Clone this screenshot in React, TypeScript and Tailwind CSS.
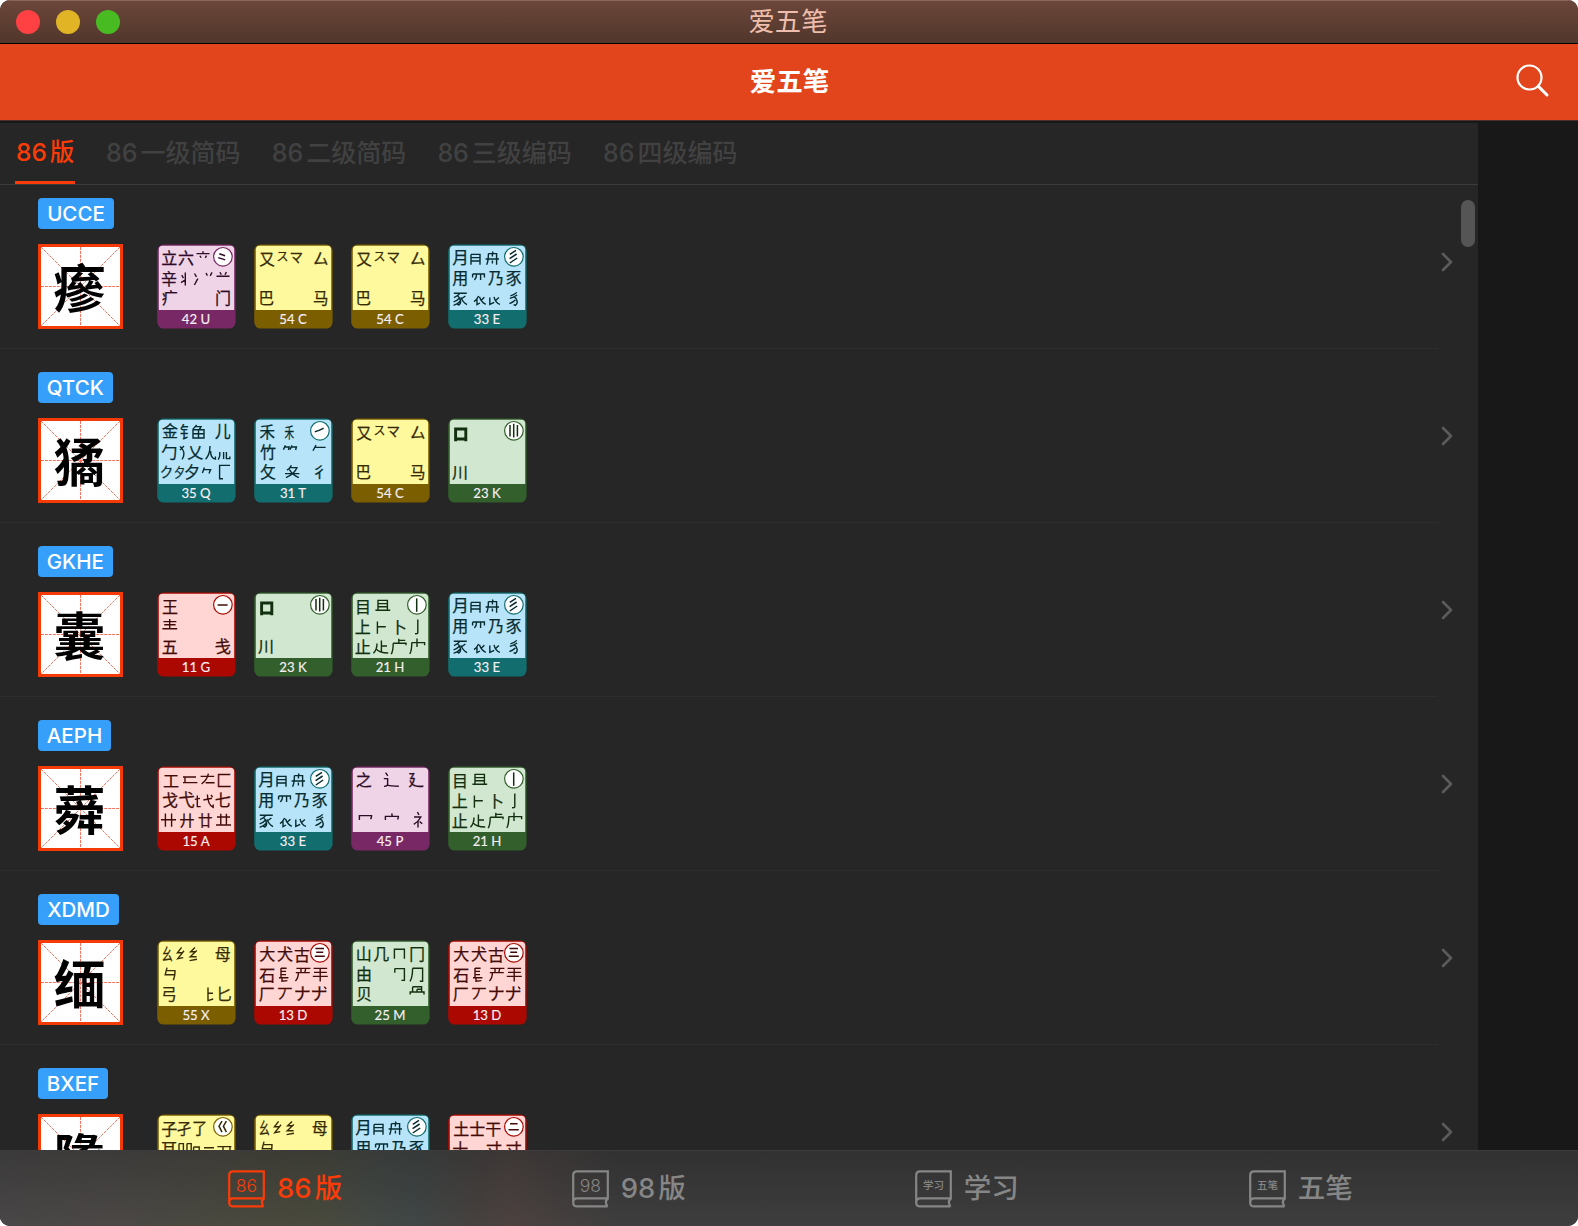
import React from "react";

const SANS = "font-['Inter','Noto_Sans_CJK_SC',sans-serif]";

/* A root glyph: character, centre x, centre y, size, vertical stretch, horizontal stretch */
type Glyph = [string, number, number, number?, number?, number?];

type Theme = { fill: string; edge: string; ink: string };

const themes: Record<string, Theme> = {
  purple: { fill: "#efd3e7", edge: "#782864", ink: "#2c0c26" },
  yellow: { fill: "#fff99d", edge: "#7b5e00", ink: "#362b05" },
  blue: { fill: "#b7e4f9", edge: "#126d6e", ink: "#062b30" },
  green: { fill: "#d1e7cf", edge: "#325f2b", ink: "#12300f" },
  red: { fill: "#ffd6d4", edge: "#aa0800", ink: "#430b08" },
};

type KeySpec = {
  theme: keyof typeof themes;
  label: string;
  glyphs: Glyph[];
  strokes?: string;
  heavy?: string;
  mark?: string;
};

const keys: Record<string, KeySpec> = {
  U: {
    theme: "purple",
    label: "42 U",
    glyphs: [["立", 12.3, 14.3, 16], ["六", 28.9, 14.3, 16], ["辛", 12, 34.7, 16], ["疒", 12.7, 54, 16], ["门", 66, 54, 16]],
    strokes:
      "M39.5 9.6h13M46 7.2v2.4M43 11.8l1 2M49.5 11.6l-1.2 2.2M28.3 28.5v13M24.8 31.2l1.6 3M24 38.6l4-2.6M37.5 29.5l2 3.4M37.4 41l3.4-6.4M49 29l1.4 2.6M55 28.4l-1.8 3.4M59.5 32.2h13M63 28.2l1.3 2.6M69.4 28l-1.4 2.8",
    mark: "M62.3 9.8l5.8 1.9M61.2 13.6l7 2.3",
  },
  C: {
    theme: "yellow",
    label: "54 C",
    glyphs: [["又", 13, 15, 15.5], ["ス", 28.6, 12, 12], ["マ", 42.3, 12.4, 13.5], ["厶", 66.7, 14.6, 15.5], ["巴", 12.3, 54, 15.5], ["马", 66.7, 53.8, 15.5]],
  },
  E: {
    theme: "blue",
    label: "33 E",
    glyphs: [["月", 12.4, 13.8, 16.5], ["用", 12.3, 34.3, 16], ["乃", 48, 34.3, 16], ["豕", 65.7, 34.3, 15.5]],
    strokes:
      "M23 10.4h9v10.4M23 10.4v10.4M23 13.6h9M23 17h9M40.4 9.6c0 5-.2 8-1.8 11.2M40.4 9.6h8.2v11.2M37.6 15h13.4M44.4 9.6v3M44.4 16.4v3M44.4 7.4l.8 2M24.6 30h11.8v3.4M24.6 30v3.4M28.6 30c0 3-.6 4.6-2.2 6M32.6 30v6M5.8 49.2h13M12 49.2c-1.4 2-3.4 3.4-6 4.4M9.6 51.8c3.4 2.6 4 8 1.2 9.2l-1.6-.8M11.6 54c-1.6 1.8-3.6 3-6 3.8M12.4 57c-1.6 2-4 3.6-6.8 4.4M17.4 52l-4.2 3M13 53.4c1 3 3 5.6 6 7.2M26 57.6c2-1.4 3.6-3.4 4.6-5.6M29 55.2v5.4l3-1.6M31.4 52.8c1.2 3.4 3 6 6.4 7.6M33.4 56l3-2.8M41.8 53.5v6.8l4.4-2M46 52.8c.8 3.4 2.6 6.6 6 7.6M47.3 56.8l3.6-3.2M68.8 48.4c-1.2 1.4-3.6 2.6-6.4 3.4M61.8 54.4c2.2-.6 5-1.8 7.4-3.4M66 52.6c3.4 2 4.4 7 1.4 8.8l-1.8-.8M67.4 56c-1.6 1.6-3.4 2.6-6 3.6",
    mark: "M61.8 10.4l6.2-4M61.6 14.6l7-4.6M61.8 19l7.4-5",
  },
  Q: {
    theme: "blue",
    label: "35 Q",
    glyphs: [["金", 13, 13.3, 16], ["钅", 30.5, 13.6, 15.5], ["儿", 65.7, 13.3, 16], ["勹", 12.3, 34.3, 16], ["乂", 38.3, 34.3, 16], ["ク", 9.6, 54.2, 13.5], ["夕", 22.6, 53.6, 13, 1, 0.85], ["夕", 35, 53.8, 16]],
    strokes:
      "M39.6 7l-3.8 4.4M38.6 8.6h5.4l-1.6 2.8M36 11.8h11v8.2h-11zM36 15.8h11M41.5 11.8v8.2M23 28.4l2.8 3.4M27 28l-4 4M25.4 31c1.8 3 1.8 7.4-.4 10.4M53 28c0 5.6-.9 9.6-4.4 13.2M53.6 33c0 5.2.9 7.8 4.8 8v-2.4M62.8 34v3c0 2-.6 3-1.6 4.6M66.6 34v7M69.4 34v6.6h3.4v-2M47.4 49.6l-2 5.4M46.8 51.6h6.8l-1.6 3.8M73 47.4H62.6v13.4h3.4",
  },
  T: {
    theme: "blue",
    label: "31 T",
    glyphs: [["禾", 13.3, 14, 15.5], ["禾", 35.3, 14, 15, 1, 0.64], ["竹", 14, 34.3, 16], ["攵", 14, 54, 15.5], ["彳", 65.4, 54.2, 15.5]],
    strokes:
      "M31.4 27.4l-2 4.2M30.8 29h4.4l-.8 3M38 27.4l-2 4.2M37.6 29h4.8l-.8 3M62 27l-3 5.8M61.2 29.4h10.4M37.4 47.4c-1 2-2.4 3.6-4.4 4.8M36.6 49.6h6.4c-1.8 4.6-5.4 7.8-11 10M35.4 51.6c2 3.4 5 6.2 9.4 8M31 55.6h14.4",
    mark: "M60.8 13.8c3-.6 6-2.2 8.8-3.6",
  },
  K: {
    theme: "green",
    label: "23 K",
    glyphs: [["川", 12, 53.7, 16]],
    heavy: "M7.6 11h10.2v10H7.6zM7.6 21v2.2M17.8 21v2.2",
    mark: "M62 7v11.4M65.7 5.8v13.8M69.4 7v11.4",
  },
  G: {
    theme: "red",
    label: "11 G",
    glyphs: [["王", 13, 15, 16], ["五", 12.7, 55, 16], ["戋", 65.7, 54.3, 16.5]],
    strokes: "M6.4 29.6h13M7.2 32.8h11.4M5.4 36.8h14.8M12.7 27v9.8",
    mark: "M60.6 13h10",
  },
  H: {
    theme: "green",
    label: "21 H",
    glyphs: [["目", 12, 14.6, 16], ["上", 11.7, 35, 16], ["卜", 48, 35.2, 16], ["止", 11.7, 55, 16]],
    strokes:
      "M27 18v-9.6h9.4V18M27 11.6h9.4M27 14.8h9.4M24.4 18.2h14.8M26.4 29.4v12.4M26.4 34.8h8.4M66.8 27.6v12.8c0 1.3-1.4 1.4-2.8 1.2M30.4 48.6v11M30.4 54h5.6M26 51.6c0 4-1 7.2-3.6 9.6M25 56.6c2 3 5 4.4 12.2 4.4M47.8 46.8v4.6M47.8 48.4h6.4M42.2 51.2h12.8v2M42.2 51.2c0 5.4-.2 8-2 11M66 46.6v4.8M60.6 50.6h13v2.6M60.8 50.6c0 5.6-.2 8.4-2 11.4M66 48.4v6.6",
    mark: "M65.7 6.4v13.4",
  },
  A: {
    theme: "red",
    label: "15 A",
    glyphs: [["工", 14, 15, 16], ["匚", 67, 14.2, 16], ["戈", 13, 34.3, 16], ["弋", 29.6, 33.8, 16.5], ["七", 65.7, 34.3, 16], ["廾", 30, 54.2, 15], ["廿", 48.3, 54.2, 14.5]],
    strokes:
      "M26 11h13M28 11v5.6M26 16.6h14.4M43.6 10.4h13.6M51.4 7.6c-1 4.4-3 7.8-6.8 10.2M48.6 16.8h9M40.3 29.4v11.2h3.4M37.8 33.4l5.2-1M46.4 34l8.6-1.8M50.4 28.4c.2 5.6 1.8 11 5.8 13v-3M54 28.8l1.6 2.4M4 53.8h15M8.4 47.4v13.4M14.6 47.4v13.4M60 51h13M59 59h15M63.8 47.8v11.2M69.4 47.8v11.2",
  },
  P: {
    theme: "purple",
    label: "45 P",
    glyphs: [["之", 12.7, 13.5, 16], ["廴", 65, 13.8, 16]],
    strokes:
      "M34.6 6.6l2.2 3.2M32.8 12.6h3.8v6M33 20.4c1.4 0 2.4-1 3.6-1.2 3 1 7 1 11.2 1M8.4 54v-4.4h12.2c0 1.6-.4 2.6-1 3.6M34.4 54v-3.6h13c0 1.2-.4 2-.8 3M40.8 47.4l.4 3M66.4 46l1.6 3M63 51h6.8c-1.4 3-3.8 5.4-7 7.4M67 54.6v7M68.6 55.4l2.6 2.4",
  },
  X: {
    theme: "yellow",
    label: "55 X",
    glyphs: [["幺", 10.3, 14.2, 15.5, 1, 0.72], ["弓", 12, 54, 15.5], ["母", 65.7, 13.7, 16], ["匕", 66.9, 53.8, 15.5]],
    strokes:
      "M24.6 7.4l-4.2 5.4h5.4M27 10.8l-6.2 7.8 5.4-1M38 7.4l-4.4 4.4h4.8M39.8 10.4l-6.6 6.4h6.4M32.6 20.6l7.4-1.4M10 27.6l-1.8 7.2h10M10 30.6h8c0 4-.6 7.6-1.8 9.6M51 47.6v13l5.2-1.6M51 53.2h5",
  },
  D: {
    theme: "red",
    label: "13 D",
    glyphs: [["大", 13.3, 14.3, 16], ["犬", 31, 14.3, 16], ["古", 48, 14.6, 16], ["石", 13.3, 34.6, 16], ["厂", 12.7, 54, 16], ["丆", 31, 54, 15.5], ["ナ", 48.3, 53.8, 17], ["ナ", 65, 53.8, 17]],
    strokes:
      "M27 28v9.6M27 28.2h5.6M27 31.4h5M27 34.6h5M25 37.8h9.4M28 37.8v3.4l5.4-.6M42.4 28.4h14M47 28.4v4M51.8 28.4l-1 4M41.8 32.6h14M44.4 32.8c0 3.8-.6 5.8-3 8.2M59.6 28.4h13.6M60 32.4h12.8M58.8 36.4h15M66.2 28.4v13M70.2 46.6l2 2.4",
    mark: "M61.4 8.4h8.6M62.2 12.2h7M60.8 16.2h10",
  },
  M: {
    theme: "green",
    label: "25 M",
    glyphs: [["山", 12.7, 14.3, 16], ["几", 30.3, 14.3, 16], ["冂", 66, 14.3, 16], ["由", 13, 34.3, 16], ["贝", 13, 53.8, 16]],
    strokes:
      "M43.4 18.8V9.2h10v9.6M43.8 28.6h9.6v11.8h-3M43.8 28.6v4.2M61.6 28.2h10v13h-2.8M61.6 28.2c0 6.4-.4 9.8-2.6 13.2M61.6 46.8h9v5M61.6 46.8v5M66 49.2v2.8M66 49.2h4.4M59.2 54.6v-2.6h13.8v2.6",
  },
  B: {
    theme: "yellow",
    label: "52 B",
    glyphs: [["子", 12.3, 14.5, 16], ["孑", 27, 14.5, 15], ["了", 42.7, 14.5, 15.5], ["耳", 12, 34.6, 16]],
    strokes: "M22 29.6v10M22 29.6h4.4v8M30 29.6v10M30 29.6h4.2v8M36.6 33h5.6v6M36.6 33v6M47 33.8h10M60.4 32.6h14M66 32.6v5M73 32.6v5",
    mark: "M65 7.2l-3 5 3 6M69.4 7.2l-3 5 3 6",
  },
  F: {
    theme: "red",
    label: "12 F",
    glyphs: [["土", 13.3, 15, 16], ["士", 29.3, 15, 16], ["干", 45.3, 15.2, 16], ["十", 12.3, 34.6, 16], ["寸", 46, 34.6, 16], ["寸", 65.7, 34.6, 16]],
    mark: "M62 9.8h7.6M60.6 15.8h10.2",
  },
};

function Keycap({ id }: { id: string }) {
  const k = keys[id];
  const t = themes[k.theme];
  return (
    <svg width="79" height="85" viewBox="0 0 79 85" className="block shrink-0" role="img" aria-label={k.label}>
      <rect x="0.2" y="0.4" width="78.4" height="84.2" rx="6.5" fill={t.edge} />
      <path d="M5.6 1.8h67.8q3.8 0 3.8 3.8V66H1.8V5.6q0-3.8 3.8-3.8z" fill={t.fill} />
      {k.glyphs.map(([ch, x, y, s = 15.5, sy = 1, sx = 1], i) => (
        <text
          key={i}
          transform={`translate(${x} ${y}) scale(${sx} ${sy})`}
          y={s * 0.385}
          textAnchor="middle"
          fontSize={s}
          fill={t.ink}
          stroke={t.ink}
          strokeWidth="0.25"
          className="font-['Noto_Sans_CJK_SC',sans-serif]"
        >
          {ch}
        </text>
      ))}
      {k.strokes && <path d={k.strokes} fill="none" stroke={t.ink} strokeWidth="1.4" />}
      {k.heavy && <path d={k.heavy} fill="none" stroke={t.ink} strokeWidth="2.9" />}
      {k.mark && (
        <>
          <circle cx="65.9" cy="12.8" r="9.3" fill="#fff" stroke={t.edge} strokeWidth="1.2" />
          <path d={k.mark} fill="none" stroke={t.ink} strokeWidth="1.5" />
        </>
      )}
      <text x="39" y="79.8" textAnchor="middle" fontSize="13.2" fill="#f6eef3" stroke="#f6eef3" strokeWidth="0.15" className="font-['Lato',sans-serif]">
        {k.label}
      </text>
    </svg>
  );
}

const rows = [
  { code: "UCCE", char: "瘮", width: 76 },
  { code: "QTCK", char: "獝", width: 74.5 },
  { code: "GKHE", char: "囊", width: 74.5 },
  { code: "AEPH", char: "蕣", width: 73 },
  { code: "XDMD", char: "缅", width: 81 },
  { code: "BXEF", char: "墬", width: 70 },
];

function CharBox({ char }: { char: string }) {
  return (
    <div className="relative h-[85px] w-[85px] shrink-0 border-[3px] border-[#f43b07] bg-white">
      <svg viewBox="0 0 80 80" className="absolute inset-0 h-full w-full" fill="none" stroke="#f5604a" strokeWidth="0.9" strokeDasharray="3 1">
        <path d="M0 0L80 80M80 0L0 80M40 0V80M0 40H80" />
      </svg>
      <div className="relative flex h-full items-center justify-center font-['Noto_Sans_CJK_SC',sans-serif] text-[52px] leading-[78px] font-bold text-black">
        <span className="-mt-px -ml-[2px]">{char}</span>
      </div>
    </div>
  );
}

function Row({ code, char, width }: { code: string; char: string; width: number }) {
  return (
    <div className="flex h-[174px] shrink-0">
      <div className="flex grow flex-col border-b border-[#2d2d2d] pt-[23px] pl-[38px]">
        <div
          className="flex h-[31px] items-center justify-center rounded-[4px] bg-[#369ffa] pt-[2px] text-[20.5px] leading-none font-medium text-white"
          style={{ width }}
        >
          {code}
        </div>
        <div className="mt-[15px] flex">
          <CharBox char={char} />
          <div className="ml-[34px] flex gap-[18px]">
            {code.split("").map((c, i) => (
              <Keycap key={i} id={c} />
            ))}
          </div>
        </div>
      </div>
      <div className="flex w-[40px] items-center">
        <svg width="14" height="22" viewBox="0 0 14 22" className="ml-[2px]" fill="none" stroke="#5b5b5b" strokeWidth="2.6" strokeLinecap="round" strokeLinejoin="round">
          <path d="M3 3l8 8-8 8" />
        </svg>
      </div>
    </div>
  );
}

function Book({ label, cjk }: { label: string; cjk?: boolean }) {
  return (
    <svg width="37" height="38" viewBox="0 0 37 38" fill="none" stroke="currentColor" strokeWidth="2.2">
      <path d="M1.2 32.4V5.4q0-4 4-4H35.8V28.4H5.2q-4 0-4 4t4 4H35.6" />
      <path d="M35.8 28.4q-3.6 3.4-.4 8" />
      <text
        x="18.4"
        y={cjk ? 19.4 : 21.9}
        textAnchor="middle"
        fontSize={cjk ? 10.5 : 17.5}
        fill="currentColor"
        stroke="none"
        className={cjk ? "font-['Noto_Sans_CJK_SC',sans-serif] font-medium" : "font-['Inter',sans-serif] font-light"}
      >
        {label}
      </text>
    </svg>
  );
}

const navItems = [
  { icon: "86", num: "86", text: "版", left: "ml-[228px]", active: true },
  { icon: "98", num: "98", text: "版", left: "ml-[229.5px]" },
  { icon: "学习", num: "", text: "学习", left: "ml-[229px]", cjk: true },
  { icon: "五笔", num: "", text: "五笔", left: "ml-[230px]", cjk: true },
];

const tabs = ["一级简码", "二级简码", "三级编码", "四级编码"];

export default function App() {
  return (
    <div className="h-[1226px] w-[1578px] overflow-hidden bg-white">
      <div className={`flex h-full w-full flex-col overflow-hidden rounded-[10px] bg-[#181818] ${SANS}`}>
        <div className="relative flex h-[44px] shrink-0 items-center border-t border-b border-t-[#8a6659] border-b-black bg-linear-to-b from-[#6c463a] to-[#51362b] pl-[16px]">
          <div className="flex gap-[16px]">
            <span className="h-[24px] w-[24px] rounded-full bg-[#ff4143]" />
            <span className="h-[24px] w-[24px] rounded-full bg-[#e0b424]" />
            <span className="h-[24px] w-[24px] rounded-full bg-[#48bb23]" />
          </div>
          <div className="absolute inset-x-0 top-0 pr-[2px] text-center text-[26.3px] leading-[42px] text-[#eebdac]">爱五笔</div>
        </div>

        <div className="relative flex h-[77px] shrink-0 items-center justify-center border-b border-[#4a3029] bg-[#e2441b] pl-[1px] text-[26.5px] leading-none font-bold text-white">
          <span className="-mt-px">爱五笔</span>
          <svg width="36" height="36" viewBox="0 0 36 36" className="absolute top-[18px] right-[28.5px]" fill="none" stroke="#fff" strokeWidth="2.2" strokeLinecap="round">
            <circle cx="15.5" cy="15.5" r="12" />
            <path d="M24.4 24.4L33 33" strokeWidth="3" />
          </svg>
        </div>

        <div className="mt-[2px] flex min-h-0 grow flex-col">
          <div className="flex min-h-0 w-[1478px] grow flex-col bg-[#262626]">
            <div className="flex h-[62px] shrink-0 gap-[31px] border-b border-[#3b3b3b] pl-[15px] text-[25px] font-medium text-[#414141]">
              <div className="flex w-[60px] items-center border-b-[3px] border-[#fb3c08] pl-[1px] text-[24.5px] text-[#fb3c08]">
                <span className="mt-px">86</span>
                <span className="mt-px ml-[3px]">版</span>
              </div>
              {tabs.map((t) => (
                <div key={t} className="flex w-[134.7px] items-center gap-[3px] whitespace-nowrap">
                  <span>86</span>
                  <span>{t}</span>
                </div>
              ))}
            </div>

            <div className="relative min-h-0 grow overflow-hidden">
              <div className="-mt-[10px] flex flex-col">
                {rows.map((r) => (
                  <Row key={r.code} {...r} />
                ))}
              </div>
              <div className="absolute top-[15px] right-[3px] h-[47px] w-[14px] rounded-full bg-[#555]" />
            </div>
          </div>
        </div>

        <div
          className="flex h-[76px] shrink-0 border-t border-[#3c3c3c] pt-[19px] text-[#868686]"
          style={{
            background:
              "linear-gradient(rgba(38,38,38,0.4), rgba(38,38,38,0)), linear-gradient(90deg, #494747 0px, #4b4846 110px, #4a493f 230px, #494a3d 320px, #444945 370px, #404746 415px, #47413f 480px, #4c4240 510px, rgba(62,62,62,0) 620px), linear-gradient(#393939, #3e3e3e)",
          }}
        >
          {navItems.map((n) => (
            <div key={n.icon} className={`flex h-[38px] shrink-0 items-center ${n.left} ${n.active ? "text-[#fb3c08]" : ""}`}>
              <Book label={n.icon} cjk={n.cjk} />
              <div className="-mt-px ml-[12px] flex items-center gap-[3px] text-[27.5px] leading-none font-medium">
                {n.num && <span>{n.num}</span>}
                <span>{n.text}</span>
              </div>
            </div>
          ))}
        </div>
      </div>
    </div>
  );
}
